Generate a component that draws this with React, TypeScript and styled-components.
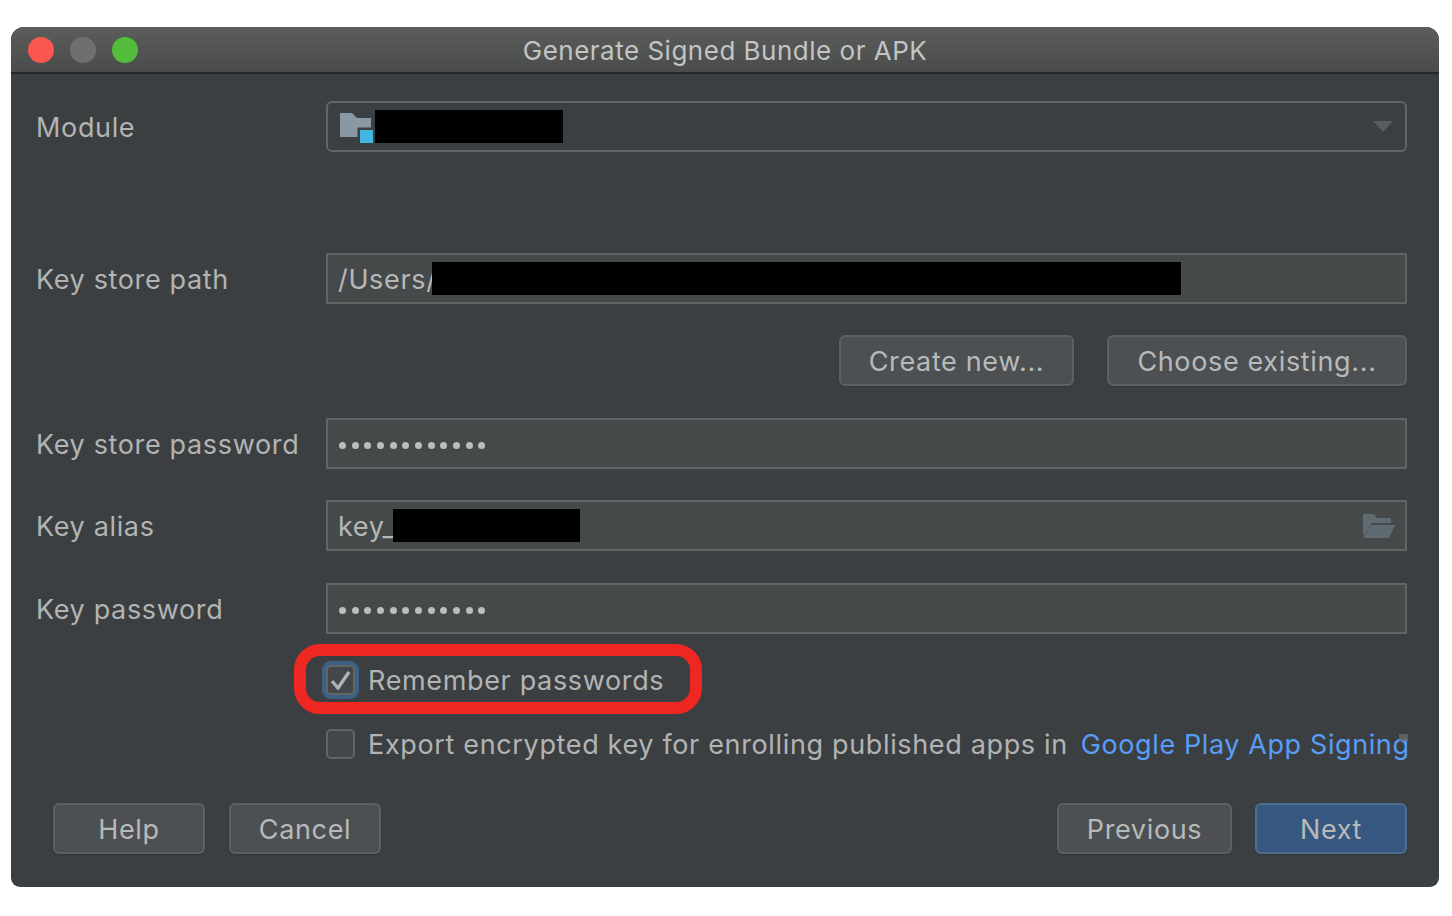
import React from "react";
import styled, { createGlobalStyle } from "styled-components";

const GlobalStyle = createGlobalStyle`
  html, body {
    margin: 0;
    padding: 0;
    background: #ffffff;
    font-family: "Inter", "Liberation Sans", sans-serif;
  }
`;

const Page = styled.div`
  width: 1452px;
  height: 916px;
  padding: 27px 13px 29px 11px;
  box-sizing: border-box;
`;

const Window = styled.div`
  display: flex;
  flex-direction: column;
  height: 860px;
  background: #3c3f41;
  border-radius: 13px 13px 9px 9px;
  overflow: hidden;
`;

const TitleBar = styled.div`
  position: relative;
  display: flex;
  align-items: center;
  justify-content: center;
  flex: none;
  height: 45px;
  background: linear-gradient(#5b5d5b, #4a4c4b);
  border-bottom: 2px solid #262728;
`;

const Lights = styled.div`
  position: absolute;
  left: 17px;
  top: 10px;
  display: flex;
  gap: 16px;
`;

const Light = styled.span<{ $color: string }>`
  width: 26px;
  height: 26px;
  border-radius: 50%;
  background: ${({ $color }) => $color};
`;

const Title = styled.div`
  padding-top: 2px;
  font-size: 26px;
  color: #c3c4c4;
  letter-spacing: 0.5px;
`;

const Form = styled.div`
  display: flex;
  flex-direction: column;
  padding: 27px 32px 0 25px;
`;

const Row = styled.div<{ $gap?: number }>`
  display: grid;
  grid-template-columns: 290px 1fr;
  align-items: center;
  margin-top: ${({ $gap }) => $gap ?? 0}px;
`;

const Label = styled.div`
  padding-top: 2px;
  font-size: 27px;
  color: #b2b4b4;
  letter-spacing: 0.65px;
  white-space: nowrap;
`;

const Field = styled.div<{ $round?: boolean }>`
  display: flex;
  align-items: center;
  justify-content: space-between;
  height: 51px;
  padding: 0 10px;
  box-sizing: border-box;
  background: ${({ $round }) => ($round ? "#3c3f41" : "#45494a")};
  border: 2px solid #626465;
  border-radius: ${({ $round }) => ($round ? 6 : 1)}px;
  font-size: 27px;
  color: #b6b8b8;
  letter-spacing: 0.65px;
`;

const FieldText = styled.div`
  display: flex;
  align-items: center;
  white-space: nowrap;
`;

const FieldValue = styled.span`
  padding-top: 2px;
`;

const Redaction = styled.span<{ $width: number; $overlap?: number }>`
  display: block;
  width: ${({ $width }) => $width}px;
  height: 33px;
  margin-left: ${({ $overlap }) => -($overlap ?? 0)}px;
  background: #000000;
`;

const Dots = styled.div`
  display: flex;
  gap: 5.68px;
  padding: 4px 0 0 1px;
`;

const Dot = styled.span`
  width: 7px;
  height: 7px;
  border-radius: 50%;
  background: #bcbebe;
`;

const ButtonRow = styled.div<{ $gap: number }>`
  display: flex;
  justify-content: flex-end;
  gap: 33px;
  margin-top: ${({ $gap }) => $gap}px;
`;

const Button = styled.button<{ $width: number; $primary?: boolean }>`
  width: ${({ $width }) => $width}px;
  height: 51px;
  padding: 2px 0 0;
  box-sizing: border-box;
  background: ${({ $primary }) => ($primary ? "#365880" : "#4c5052")};
  border: 2px solid ${({ $primary }) => ($primary ? "#4c708c" : "#5e6060")};
  border-radius: 6px;
  box-shadow: 0 1px 2px rgba(0, 0, 0, 0.18);
  font-family: inherit;
  font-size: 27px;
  color: #b8baba;
  letter-spacing: 0.65px;
`;

const CheckRow = styled.div<{ $gap: number }>`
  position: relative;
  display: flex;
  align-items: center;
  height: 38px;
  margin-top: ${({ $gap }) => $gap}px;
  margin-left: 286px;
  font-size: 27px;
  color: #b2b4b4;
  letter-spacing: 0.65px;
  white-space: nowrap;
`;

const BoxSlot = styled.div`
  display: flex;
  align-items: center;
  justify-content: center;
  flex: none;
  width: 37px;
  margin-right: 9px;
`;

const CheckBox = styled.span<{ $focused?: boolean }>`
  display: flex;
  align-items: center;
  justify-content: center;
  width: 29px;
  height: 30px;
  box-sizing: border-box;
  background: #43474a;
  border: 2px solid #626465;
  border-radius: 5px;
  box-shadow: ${({ $focused }) => ($focused ? "0 0 0 4px #3d6185" : "none")};
`;

const Highlight = styled.div`
  position: absolute;
  left: -28px;
  top: -17px;
  width: 408px;
  height: 70px;
  box-sizing: border-box;
  border: 12px solid #ee2722;
  border-radius: 26px;
  pointer-events: none;
`;

const Link = styled.a`
  margin-left: 13px;
  color: #589df6;
  letter-spacing: 0.6px;
`;

const LinkEnd = styled.span`
  position: relative;
`;

const Smudge = styled.span`
  position: absolute;
  right: 2px;
  top: 6px;
  width: 9px;
  height: 7px;
  background: #6a6c6d;
  opacity: 0.75;
`;

const Footer = styled.div`
  display: flex;
  align-items: center;
  margin-top: 40px;
  padding-left: 17px;
`;

const FooterGroup = styled.div<{ $gap: number }>`
  display: flex;
  gap: ${({ $gap }) => $gap}px;
`;

const Spacer = styled.div`
  flex: 1;
`;

const ModuleIcon = () => (
  <svg width="34" height="30" viewBox="0 0 34 30" style={{ marginLeft: 2, marginRight: 1, marginTop: 3 }}>
    <path d="M0 0h12l5 5h14v19H0z" fill="#8a98a3" />
    <rect x="17.5" y="14.5" width="16" height="15.5" fill="#3c3f41" />
    <rect x="20" y="17" width="13" height="13" fill="#40b6e0" />
  </svg>
);

const ComboArrow = () => (
  <svg width="20" height="11" viewBox="0 0 20 11" style={{ marginRight: 2 }}>
    <path d="M0 0h20L10 11z" fill="#5a5c5d" />
  </svg>
);

const OpenFolderIcon = () => (
  <svg width="32" height="24" viewBox="0 0 32 24">
    <path d="M0 0h11l3 4h14v5H9L1 21H0z" fill="#5f6b70" />
    <path d="M8 11h24l-6 13H0z" fill="#5f6b70" />
  </svg>
);

const CheckMark = () => (
  <svg width="22" height="20" viewBox="0 0 22 20">
    <path d="M2 11l6 7L19 2" fill="none" stroke="#b0b2b2" strokeWidth="3.4" />
  </svg>
);

const PasswordDots = () => (
  <Dots>
    {Array.from({ length: 12 }).map((_, i) => (
      <Dot key={i} />
    ))}
  </Dots>
);

export default function App() {
  return (
    <Page>
      <GlobalStyle />
      <Window>
        <TitleBar>
          <Lights>
            <Light $color="#f95750" />
            <Light $color="#6e6f6e" />
            <Light $color="#53bd3b" />
          </Lights>
          <Title>Generate Signed Bundle or APK</Title>
        </TitleBar>
        <Form>
          <Row>
            <Label>Module</Label>
            <Field $round>
              <FieldText>
                <ModuleIcon />
                <Redaction $width={188} />
              </FieldText>
              <ComboArrow />
            </Field>
          </Row>
          <Row $gap={101}>
            <Label>Key store path</Label>
            <Field>
              <FieldText>
                <FieldValue>/Users/</FieldValue>
                <Redaction $width={749} $overlap={5} />
              </FieldText>
            </Field>
          </Row>
          <ButtonRow $gap={31}>
            <Button $width={235}>Create new...</Button>
            <Button $width={300}>Choose existing...</Button>
          </ButtonRow>
          <Row $gap={32}>
            <Label>Key store password</Label>
            <Field>
              <PasswordDots />
            </Field>
          </Row>
          <Row $gap={31}>
            <Label>Key alias</Label>
            <Field>
              <FieldText>
                <FieldValue>key_</FieldValue>
                <Redaction $width={187} $overlap={2} />
              </FieldText>
              <OpenFolderIcon />
            </Field>
          </Row>
          <Row $gap={32}>
            <Label>Key password</Label>
            <Field>
              <PasswordDots />
            </Field>
          </Row>
          <CheckRow $gap={27}>
            <Highlight />
            <BoxSlot>
              <CheckBox $focused>
                <CheckMark />
              </CheckBox>
            </BoxSlot>
            Remember passwords
          </CheckRow>
          <CheckRow $gap={26}>
            <BoxSlot>
              <CheckBox />
            </BoxSlot>
            Export encrypted key for enrolling published apps in
            <Link>
              Google Play App <LinkEnd>Signing<Smudge /></LinkEnd>
            </Link>
          </CheckRow>
          <Footer>
            <FooterGroup $gap={24}>
              <Button $width={152}>Help</Button>
              <Button $width={152}>Cancel</Button>
            </FooterGroup>
            <Spacer />
            <FooterGroup $gap={23}>
              <Button $width={175}>Previous</Button>
              <Button $width={152} $primary>
                Next
              </Button>
            </FooterGroup>
          </Footer>
        </Form>
      </Window>
    </Page>
  );
}
